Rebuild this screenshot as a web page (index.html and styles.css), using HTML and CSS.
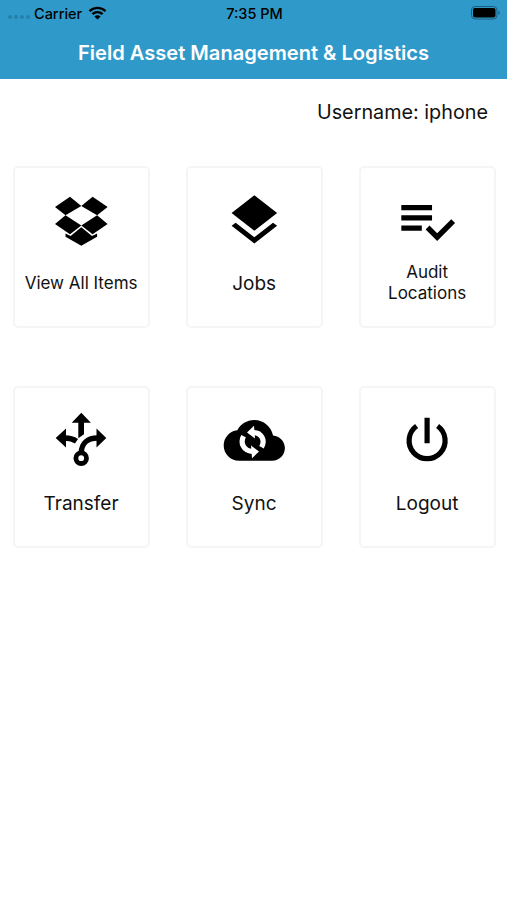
FILE: index.html
```html
<!DOCTYPE html>
<html>

	<head>
		<meta charset="UTF-8">
		<title>Field Asset Management &amp; Logistics</title>
		<link rel="stylesheet" href="styles.css">
	</head>

	<body>
		<div class="header">
			<div class="status">
				<div class="carrier">
					<span class="dots"><i></i><i></i><i></i><i></i></span>
					<span>Carrier</span>
					<svg class="wifi" viewBox="0 0 18 14">
						<path d="M1 5.2a11.4 11.4 0 0 1 16 0M3.9 8.2a7.3 7.3 0 0 1 10.2 0" fill="none" stroke="#000" stroke-width="2.4" />
						<path d="M9 13.6L5.9 10.5a4.4 4.4 0 0 1 6.2 0z" />
					</svg>
				</div>
				<span>7:35 PM</span>
				<svg class="battery" viewBox="0 0 30 14">
					<rect x="0.5" y="0.5" width="25.5" height="12.5" rx="3.5" fill="none" stroke="#1c5d7c" />
					<rect x="2" y="2" width="22.5" height="9.5" rx="2" />
					<path d="M27.5 4.7c1.8.6 1.8 3.5 0 4.1z" fill="#1c5d7c" />
				</svg>
			</div>
			<h1 class="title">Field Asset Management &amp; Logistics</h1>
		</div>
		<div class="user">Username: iphone</div>
		<div class="menu">
			<a class="card">
				<svg class="icon" viewBox="0 0 64 64">
					<path d="M21 6.7L32.3 16l-15.8 9.3L6 17zM43.6 6.7L32.3 16l15.8 9.3L58.6 17zM16.5 25.3L32.3 35.5 21 44.3 6 34zM48.1 25.3L32.3 35.5l11.3 8.8L58.6 34z" />
					<path d="M32.3 37.3L43 46l5.1-2.6v3.4l-15.8 9-15.8-9v-3.4L21.6 46z" />
				</svg>
				<span class="label small">View All Items</span>
			</a>
			<a class="card">
				<svg class="icon" viewBox="0 0 64 64">
					<path transform="translate(2 .27) scale(2.53)" d="M11.99 18.54l-7.37-5.73L3 14.07l9 7 9-7-1.63-1.27-7.38 5.74zM12 16l7.36-5.73L21 9l-9-7-9 7 1.63 1.27L12 16z" />
				</svg>
				<span class="label">Jobs</span>
			</a>
			<a class="card">
				<svg class="icon" viewBox="0 0 64 64">
					<path transform="translate(1.2 -.3) scale(2.56)" d="M14 10H2v2h12v-2zm0-4H2v2h12V6zM2 16h8v-2H2v2zm19.5-4.5L23 13l-6.99 7-4.51-4.5L13 14l3.01 3 5.49-5.5z" />
				</svg>
				<span class="label small">Audit<br>Locations</span>
			</a>
			<a class="card">
				<svg class="icon" viewBox="0 0 64 64">
					<path d="M32.3 2.7l9.6 10H35v11.6l-5.7 4V12.7h-6.6zM6.7 28L17 18.4v19.2zM57.3 28l-9.8-9.6v19.2z" />
					<path d="M16 28c5 0 8 .8 11.5 3.2M48.5 28C39 28 32.3 33 32.3 43" fill="none" stroke="#000" stroke-width="5.4" />
					<circle cx="32.2" cy="48.2" r="5.3" fill="none" stroke="#000" stroke-width="4.8" />
				</svg>
				<span class="label">Transfer</span>
			</a>
			<a class="card">
				<svg class="icon" viewBox="0 0 64 64">
					<path transform="translate(1.7 -.2) scale(2.55)" d="M19.35 10.04C18.67 6.59 15.64 4 12 4 9.11 4 6.6 5.64 5.35 8.04 2.34 8.36 0 10.91 0 14c0 3.31 2.69 6 6 6h13c2.76 0 5-2.24 5-5 0-2.64-2.05-4.78-4.65-4.96z" />
					<path d="M31.5 22.6c8 0 12 7.6 8 14.6M21.5 26.2c-3.6 7.2.4 14.8 8.6 15.2" fill="none" stroke="#fff" stroke-width="5.2" />
					<path d="M25 22.4l7-6.6 1 12.6zM37 41.6L30 48.2l-1-12.6z" fill="#fff" />
				</svg>
				<span class="label">Sync</span>
			</a>
			<a class="card">
				<svg class="icon" viewBox="0 0 64 64">
					<path d="M32.1 7.7v25.6M21.6 16a18 18 0 1 0 21 0" fill="none" stroke="#000" stroke-width="5.2" />
				</svg>
				<span class="label">Logout</span>
			</a>
		</div>
	</body>

</html>
```
FILE: styles.css
```css
* {
	margin: 0;
	padding: 0;
	box-sizing: border-box;
}

body {
	background: #fff;
	color: #111;
	font-family: Inter, "Liberation Sans", sans-serif;
}

.header {
	height: 79px;
	background: #2f9aca;
}

.status {
	display: grid;
	grid-template-columns: 1fr auto 1fr;
	align-items: center;
	height: 26px;
	padding: 0 6px 0 8px;
	color: #000;
	font-size: 14.5px;
	font-weight: 500;
}

.carrier {
	display: flex;
	align-items: center;
}

.dots {
	display: flex;
	gap: 2px;
	width: 26px;
	padding-top: 8px;
}

.dots i {
	width: 4px;
	height: 4px;
	border-radius: 2px;
	background: #2581aa;
}

.wifi {
	width: 19px;
	height: 14px;
	margin-left: 6px;
}

.battery {
	width: 30px;
	height: 14px;
	justify-self: end;
}

.title {
	color: #fff;
	font-size: 20.1px;
	font-weight: 600;
	line-height: 54px;
	text-align: center;
	white-space: nowrap;
}

.user {
	padding: 20px 19px 0 0;
	font-size: 19.8px;
	line-height: 26px;
	text-align: right;
}

.menu {
	display: grid;
	grid-template-columns: repeat(3, 137px);
	grid-auto-rows: 162px;
	gap: 58px 36px;
	padding: 41px 0 0 12.6px;
}

.card {
	display: flex;
	flex-direction: column;
	align-items: center;
	padding-top: 22px;
	border: 2px solid #f5f5f6;
	border-radius: 5px;
}

.icon {
	width: 64px;
	height: 64px;
	margin-left: -1px;
}

.label {
	display: flex;
	align-items: center;
	height: 58px;
	font-size: 19px;
	text-align: center;
}

.small {
	font-size: 17px;
	line-height: 21px;
}
```
